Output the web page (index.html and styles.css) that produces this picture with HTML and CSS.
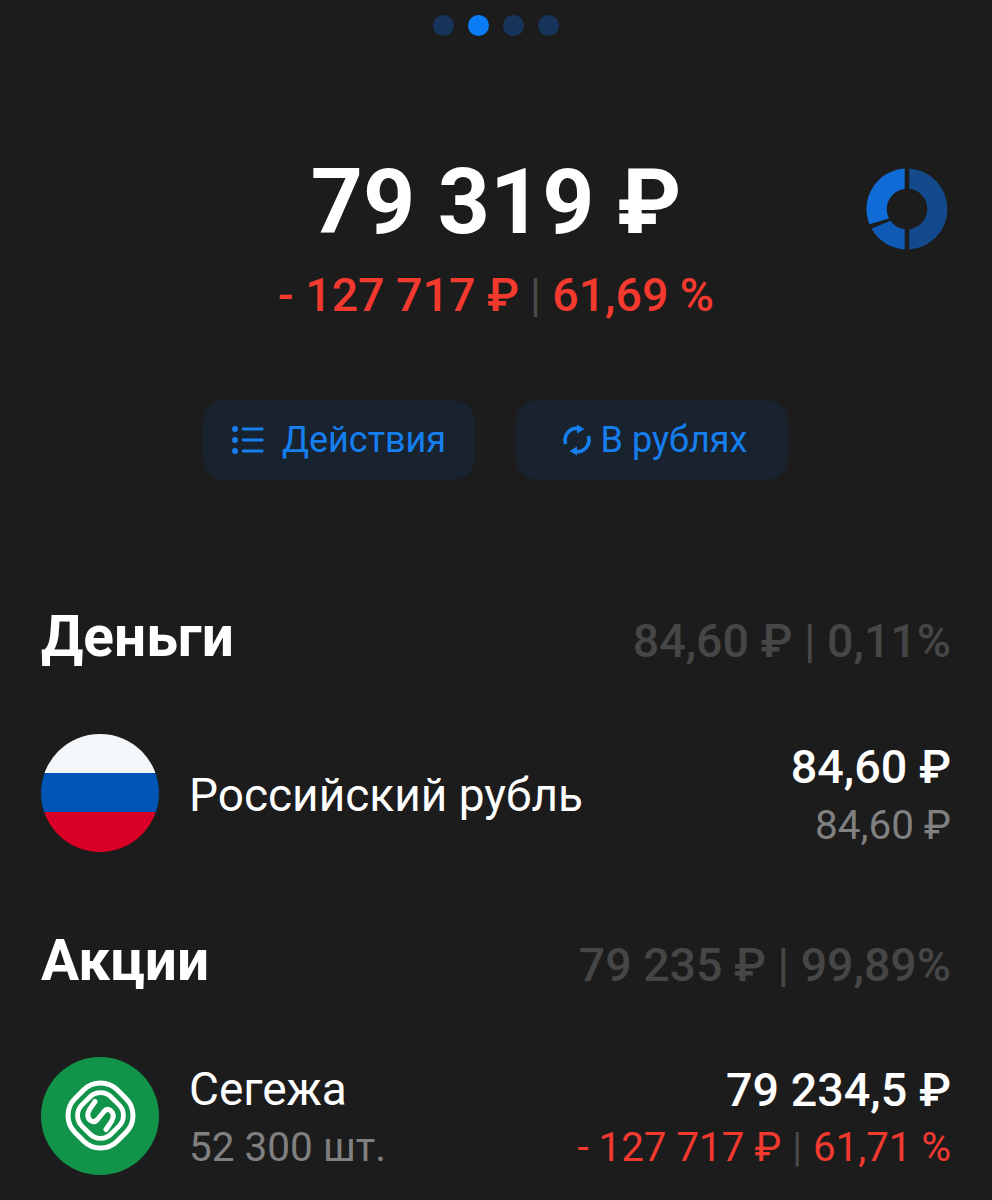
FILE: index.html
```html
<!DOCTYPE html>
<html lang="ru">
<head>
<meta charset="utf-8">
<title>Портфель</title>
<link rel="stylesheet" href="styles.css">
</head>
<body>
<main class="page">
  <div class="dots"><i class="dot"></i><i class="dot on"></i><i class="dot"></i><i class="dot"></i></div>
  <section class="summary">
    <div class="total">79 319 ₽</div>
    <div class="change">- 127 717 ₽<span class="sep">|</span>61,69 %</div>
    <svg class="donut" viewBox="0 0 82 82" aria-hidden="true">
      <path fill="#124a8c" d="M43.3 0.57A40.5 40.5 0 0 1 43.3 81.43V61.17A20.3 20.3 0 0 0 43.3 20.83Z"/>
      <path fill="#0e5ab4" d="M38.7 81.43A40.5 40.5 0 0 1 5.5 60.5L24.5 52.7A20.3 20.3 0 0 0 38.7 61.17Z"/>
      <path fill="#0f6bd6" d="M38.7 0.57A40.5 40.5 0 0 0 3.5 56.3L23 50.4A20.3 20.3 0 0 1 38.7 20.83Z"/>
    </svg>
  </section>
  <div class="actions">
    <button class="btn">
      <svg class="ic-list" viewBox="0 0 32 28" aria-hidden="true">
        <circle cx="3" cy="3" r="2.900"/><circle cx="3" cy="14" r="2.900"/><circle cx="3" cy="25" r="2.900"/>
        <path d="M11.200 3H30.200M11.200 14H30.200M11.200 25H30.200"/>
      </svg>
      <span>Действия</span>
    </button>
    <button class="btn btn-sync">
      <svg class="ic-sync" viewBox="0 0 28 32" aria-hidden="true">
        <path class="arc" d="M2.800 20A11.500 11.500 0 0 1 16 4.700M25.200 12A11.500 11.500 0 0 1 12 27.300"/>
        <path class="tip" d="M14 0.500L21.500 5L14 9.500ZM14 31.500L6.500 27L14 22.500Z"/>
      </svg>
      <span>В рублях</span>
    </button>
  </div>
  <section class="group money">
    <header class="group-head"><h2>Деньги</h2><div class="group-sum">84,60 ₽ | 0,11%</div></header>
    <div class="row">
      <svg class="logo" viewBox="0 0 118 118" aria-hidden="true">
        <defs><clipPath id="round"><circle cx="59" cy="59" r="59"/></clipPath></defs>
        <g clip-path="url(#round)">
          <rect width="118" height="39" fill="#f4f7fa"/>
          <rect y="39" width="118" height="39" fill="#0054b4"/>
          <rect y="78" width="118" height="40" fill="#d80027"/>
        </g>
      </svg>
      <div class="row-name"><div class="name">Российский рубль</div></div>
      <div class="row-vals"><div class="val">84,60 ₽</div><div class="sub">84,60 ₽</div></div>
    </div>
  </section>
  <section class="group stocks">
    <header class="group-head"><h2>Акции</h2><div class="group-sum">79 235 ₽ | 99,89%</div></header>
    <div class="row">
      <svg class="logo" viewBox="0 0 118 118" aria-hidden="true">
        <circle cx="59" cy="59" r="59" fill="#11944a"/>
        <g transform="translate(59.5 58.5)" fill="none" stroke="#fff" stroke-linecap="round">
          <rect x="-30" y="-30" width="60" height="60" rx="24" transform="rotate(45)" stroke-width="5"/>
          <rect x="-20.600" y="-20.600" width="41.200" height="41.200" rx="15" transform="rotate(45)" stroke-width="4.800"/>
          <path stroke-width="5" d="M-5.500 -14L-11 -6Q-15 1 -10 5Q-6 7.500 -3 4L3.500 -4Q6.500 -7.500 10 -5Q15 -1 11 6L5.500 14"/>
        </g>
      </svg>
      <div class="row-name"><div class="name">Сегежа</div><div class="sub">52 300 шт.</div></div>
      <div class="row-vals"><div class="val">79 234,5 ₽</div><div class="loss">- 127 717 ₽<span class="sep">|</span>61,71 %</div></div>
    </div>
  </section>
</main>
</body>
</html>
```
FILE: styles.css
```css
* { box-sizing: border-box; }
html, body { margin: 0; height: 100%; }
body {
  background: #1c1c1c;
  color: #fff;
  font-family: Roboto, "Noto Sans", "DejaVu Sans", sans-serif;
  overflow: hidden;
}
.page { width: 992px; height: 1200px; padding: 15px 41px 0; display: flex; flex-direction: column; }
.dots { display: flex; justify-content: center; gap: 14px; height: 21px; }
.dot { width: 21px; height: 21px; border-radius: 50%; background: #17345a; }
.dot.on { background: #0a7df5; }
.summary { position: relative; margin-top: 116px; display: flex; flex-direction: column; align-items: center; }
.total { font-size: 91px; font-weight: 700; line-height: 100px; }
.change { font-size: 46.500px; font-weight: 500; line-height: 52px; color: #f4392f; margin-top: 17px; }
.sep { color: #4a4a4a; font-weight: 400; margin: 0 11px; }
.donut { position: absolute; right: 3px; top: 16px; width: 82px; height: 82px; }
.actions { display: flex; justify-content: center; gap: 41px; margin-top: 79px; padding-right: 1px; }
.btn {
  width: 272px; height: 80px; border: 0; border-radius: 22px; background: #19232f; color: #167ff0;
  font: 400 36px Roboto, sans-serif; display: flex; align-items: center; justify-content: center; gap: 18px; padding: 0;
}
.btn-sync { padding-left: 6px; }
.ic-list { width: 32px; height: 28px; fill: currentColor; stroke: currentColor; flex: none; }
.ic-list circle { stroke: none; }
.ic-list path { stroke-width: 2.800; fill: none; stroke-linecap: round; }
.ic-sync { width: 28px; height: 32px; flex: none; margin-right: -8px; }
.arc { fill: none; stroke: currentColor; stroke-width: 3.600; }
.tip { fill: currentColor; }
.group-head { display: flex; justify-content: space-between; align-items: center; }
h2 { margin: 0; font-size: 56.800px; font-weight: 700; line-height: 66px; }
.group-sum { font-size: 46.500px; font-weight: 500; color: #464646; padding-top: 8px; }
.money { margin-top: 124px; }
.stocks { margin-top: 76px; }
.row { display: flex; align-items: center; margin-top: 64px; }
.stocks .row { margin-top: 63px; }
.logo { width: 118px; height: 118px; flex: none; }
.row-name { margin-left: 30px; flex: 1; padding-top: 4px; }
.name { font-size: 46px; line-height: 52px; }
.row-vals { text-align: right; display: flex; flex-direction: column; gap: 6px; padding-top: 6px; }
.val { font-size: 46.700px; font-weight: 500; line-height: 52px; }
.sub { font-size: 40.500px; line-height: 52px; color: #808080; }
.row-name .sub { margin-top: 6px; }
.loss { font-size: 40.300px; line-height: 52px; color: #f4392f; }
.loss .sep { margin: 0 11px; }
```
